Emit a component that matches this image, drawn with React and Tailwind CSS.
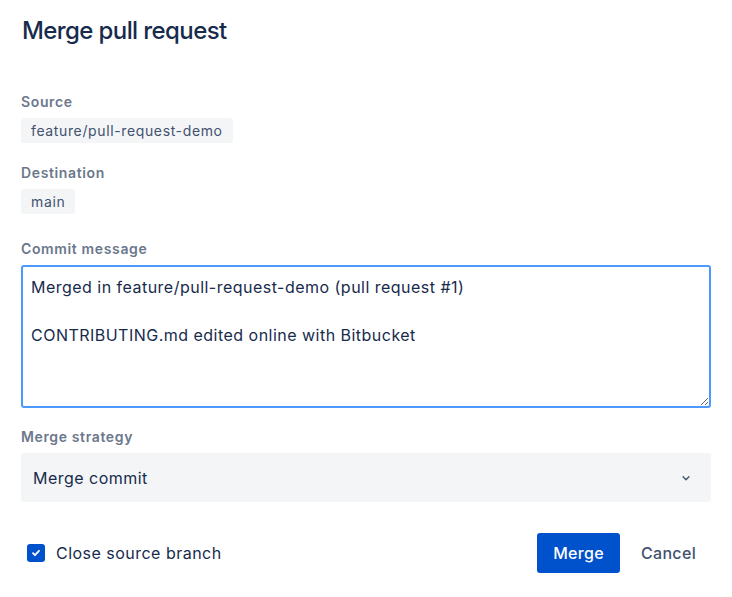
import { useState } from "react";

function FieldLabel({ children }) {
  return (
    <div className="text-[14px] font-semibold leading-[20px] tracking-[0.045em] text-[#6B778C]">
      {children}
    </div>
  );
}

function Tag({ children }) {
  return (
    <span className="inline-block rounded-[3px] bg-[#F4F5F7] px-[10px] text-[14px] leading-[25px] tracking-[0.045em] text-[#42526E]">
      {children}
    </span>
  );
}

export default function App() {
  const [message, setMessage] = useState(
    "Merged in feature/pull-request-demo (pull request #1)\n\nCONTRIBUTING.md edited online with Bitbucket"
  );
  const [closeBranch, setCloseBranch] = useState(true);

  return (
    <div
      className="min-h-screen bg-white px-[21px] pt-[17px] text-[#172B4D]"
      style={{ fontFamily: "Inter, 'Noto Sans', sans-serif" }}>
      <h1 className="pl-px text-[24px] font-medium leading-[28px] tracking-[-0.025em]">
        Merge pull request
      </h1>

      <div className="mt-[47px]">
        <FieldLabel>Source</FieldLabel>
        <div className="mt-[6px]">
          <Tag>feature/pull-request-demo</Tag>
        </div>
      </div>

      <div className="mt-[20px]">
        <FieldLabel>Destination</FieldLabel>
        <div className="mt-[6px]">
          <Tag>main</Tag>
        </div>
      </div>

      <div className="mt-[25px]">
        <FieldLabel>Commit message</FieldLabel>
        <textarea
          value={message}
          onChange={(e) => setMessage(e.target.value)}
          className="mt-[6px] block h-[143px] w-full resize-y rounded-[3px] border-2 border-[#4C9AFF] px-[8px] py-[8px] text-[16px] leading-[24px] tracking-[0.03em] text-[#172B4D] outline-none"
        />
      </div>

      <div className="mt-[19px]">
        <FieldLabel>Merge strategy</FieldLabel>
        <button className="mt-[6px] flex h-[49px] w-full items-center justify-between rounded-[3px] bg-[#F4F5F7] pl-[12px] pr-[18px] text-[16px] tracking-[0.03em] text-[#172B4D]">
          <span>Merge commit</span>
          <svg width="14" height="14" viewBox="0 0 24 24" fill="none">
            <path
              d="M7 10l5 5 5-5"
              stroke="#42526E"
              strokeWidth="2.4"
              strokeLinecap="round"
              strokeLinejoin="round"
            />
          </svg>
        </button>
      </div>

      <div className="mt-[31px] flex items-center justify-between">
        <label className="flex cursor-pointer items-center gap-[11px] pl-[6px] text-[16px] tracking-[0.03em] text-[#172B4D]">
          <span
            onClick={() => setCloseBranch(!closeBranch)}
            className={
              closeBranch
                ? "flex h-[18px] w-[18px] items-center justify-center rounded-[3px] bg-[#0052CC]"
                : "flex h-[18px] w-[18px] items-center justify-center rounded-[3px] border-2 border-[#DFE1E6] bg-[#FAFBFC]"
            }>
            {closeBranch && (
              <svg width="12" height="12" viewBox="0 0 12 12" fill="none">
                <path
                  d="M3 6.2l2 2L9 3.8"
                  stroke="white"
                  strokeWidth="1.8"
                  strokeLinecap="round"
                  strokeLinejoin="round"
                />
              </svg>
            )}
          </span>
          Close source branch
        </label>

        <div className="flex items-center gap-[6px]">
          <button className="h-[40px] rounded-[3px] bg-[#0052CC] px-[16px] text-[16px] font-medium tracking-[0.02em] text-white">
            Merge
          </button>
          <button className="h-[40px] rounded-[3px] px-[15px] text-[16px] font-medium tracking-[0.02em] text-[#42526E]">
            Cancel
          </button>
        </div>
      </div>
    </div>
  );
}
